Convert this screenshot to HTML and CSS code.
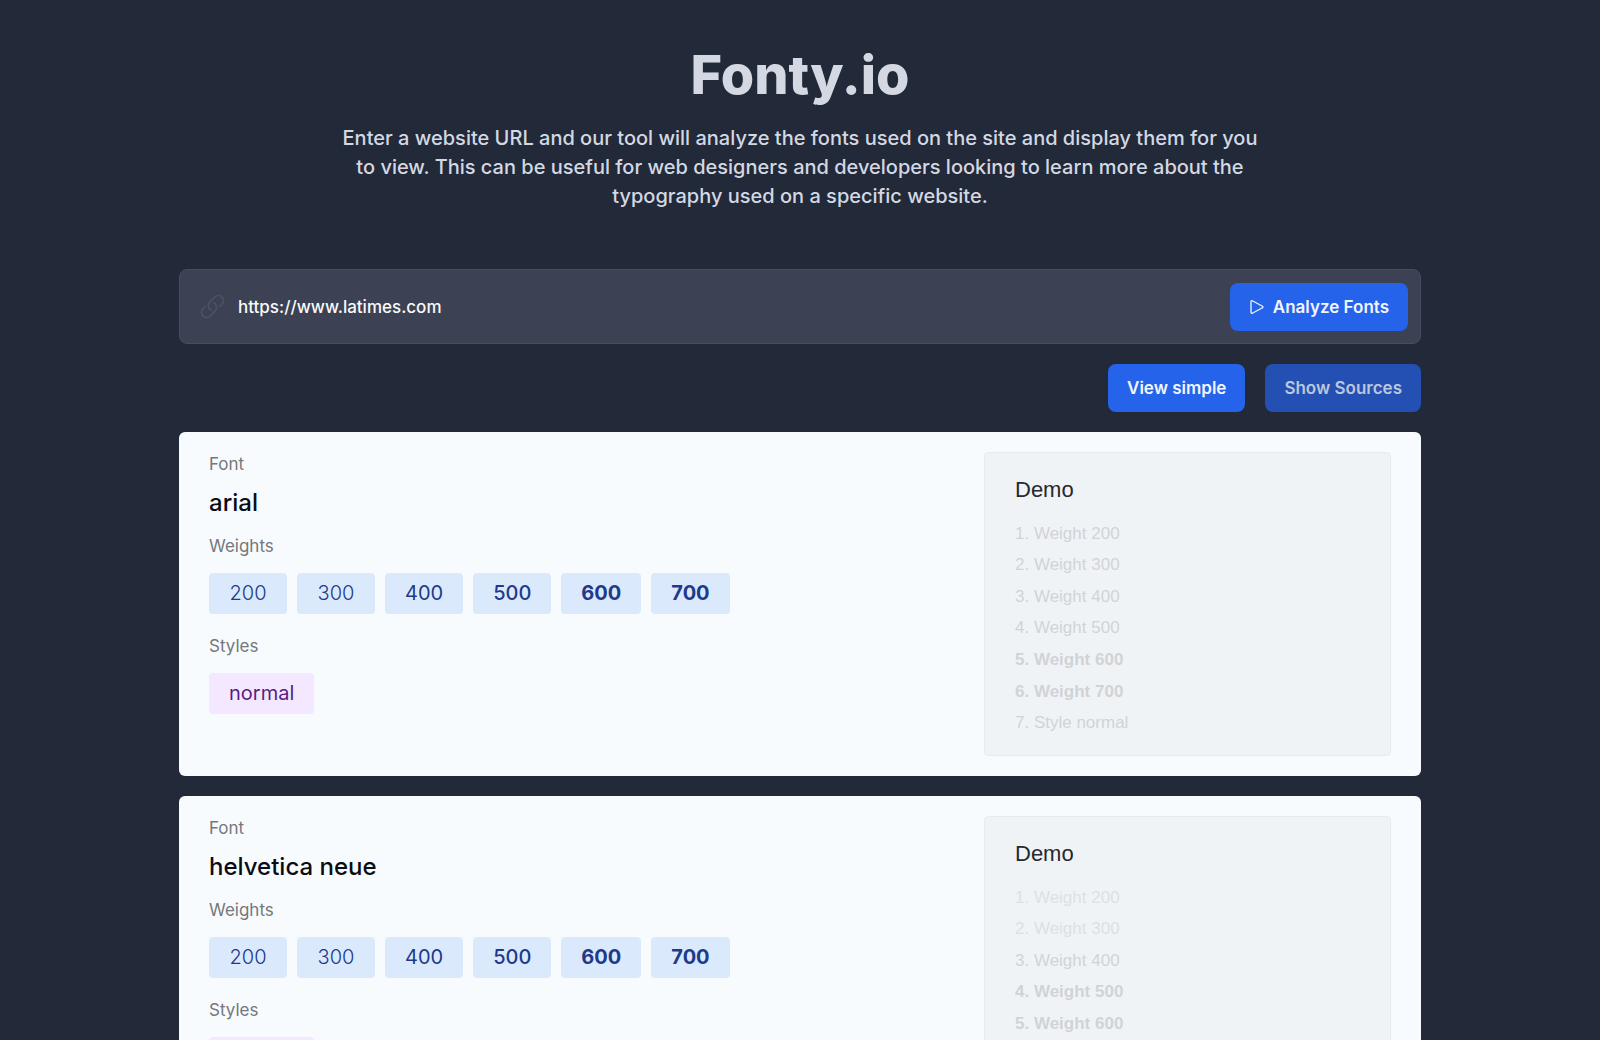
FILE: index.html
```html
<!DOCTYPE html>
<html lang="en">
<head>
    <meta charset="UTF-8">
    <meta name="viewport" content="width=device-width, initial-scale=1.0">
    <title>Fonty.io</title>
    <link rel="stylesheet" href="styles.css">
</head>
<body>
    <header class="hero">
        <h1>Fonty.io</h1>
        <p>Enter a website URL and our tool will analyze the fonts used on the site and display them for you to view. This can be useful for web designers and developers looking to learn more about the typography used on a specific website.</p>
    </header>

    <main class="container">
        <form class="search">
            <label for="url" aria-label="Website URL">
                <svg class="link-icon" viewBox="0 0 24 24" fill="none" stroke="currentColor" stroke-width="1.8" stroke-linecap="round" stroke-linejoin="round">
                    <path d="M13.19 8.688a4.5 4.5 0 0 1 1.242 7.244l-4.5 4.5a4.5 4.5 0 0 1-6.364-6.364l1.757-1.757m13.35-.622 1.757-1.757a4.5 4.5 0 0 0-6.364-6.364l-4.5 4.5a4.5 4.5 0 0 0 1.242 7.244"/>
                </svg>
            </label>
            <input type="text" id="url" value="https://www.latimes.com">
            <button type="button" class="btn">
                <svg class="play-icon" viewBox="0 0 16 16" fill="none" stroke="currentColor" stroke-width="1.3" stroke-linejoin="round">
                    <path d="M2 2.6v10.8c0 .7.7 1.1 1.3.8l10.2-5.4c.6-.3.6-1.2 0-1.5L3.3 1.8C2.7 1.5 2 1.9 2 2.6z"/>
                </svg>
                Analyze Fonts
            </button>
        </form>

        <div class="actions">
            <button type="button" class="btn">View simple</button>
            <button type="button" class="btn btn-muted">Show Sources</button>
        </div>

        <section class="card">
            <div class="info">
                <h3>Font</h3>
                <h2>arial</h2>
                <h3>Weights</h3>
                <div class="tags">
                    <span class="tag w200">200</span>
                    <span class="tag w300">300</span>
                    <span class="tag w400">400</span>
                    <span class="tag w500">500</span>
                    <span class="tag w600">600</span>
                    <span class="tag w700">700</span>
                </div>
                <h3>Styles</h3>
                <div class="tags">
                    <span class="tag tag-style">normal</span>
                </div>
            </div>
            <div class="demo">
                <h4>Demo</h4>
                <ol>
                    <li>1. Weight 200</li>
                    <li>2. Weight 300</li>
                    <li>3. Weight 400</li>
                    <li>4. Weight 500</li>
                    <li class="w600">5. Weight 600</li>
                    <li class="w700">6. Weight 700</li>
                    <li>7. Style normal</li>
                </ol>
            </div>
        </section>

        <section class="card">
            <div class="info">
                <h3>Font</h3>
                <h2>helvetica neue</h2>
                <h3>Weights</h3>
                <div class="tags">
                    <span class="tag w200">200</span>
                    <span class="tag w300">300</span>
                    <span class="tag w400">400</span>
                    <span class="tag w500">500</span>
                    <span class="tag w600">600</span>
                    <span class="tag w700">700</span>
                </div>
                <h3>Styles</h3>
                <div class="tags">
                    <span class="tag tag-style">normal</span>
                </div>
            </div>
            <div class="demo">
                <h4>Demo</h4>
                <ol>
                    <li class="light">1. Weight 200</li>
                    <li class="light">2. Weight 300</li>
                    <li>3. Weight 400</li>
                    <li class="w600">4. Weight 500</li>
                    <li class="w600">5. Weight 600</li>
                    <li class="w700">6. Weight 700</li>
                    <li>7. Style normal</li>
                </ol>
            </div>
        </section>
    </main>
</body>
</html>
```
FILE: styles.css
```css
:root {
    --bg: #222938;
    --bar: #3c4153;
    --blue: #2563eb;
    --text: #d3d8e3;
}

* {
    box-sizing: border-box;
    margin: 0;
    padding: 0;
}

body {
    font-family: Inter, 'Open Sans', sans-serif;
    background-color: var(--bg);
    color: var(--text);
    min-height: 100vh;
}

.hero {
    padding: 43px 20px 0;
    text-align: center;
}

.hero h1 {
    font-size: 54px;
    line-height: 64px;
    font-weight: 800;
}

.hero p {
    max-width: 932px;
    margin: 17px auto 0;
    font-size: 20px;
    line-height: 29px;
    font-weight: 500;
}

.container {
    width: 100%;
    max-width: 1282px;
    margin: 0 auto;
    padding: 58px 20px;
}

.search {
    display: flex;
    align-items: center;
    gap: 12px;
    height: 75px;
    padding: 0 12px 0 19px;
    background-color: var(--bar);
    border: 1px solid #484d5e;
    border-radius: 8px;
}

.search label {
    display: flex;
}

.link-icon {
    width: 27px;
    height: 27px;
    color: #4a5063;
}

.search input {
    flex: 1;
    min-width: 0;
    background: none;
    border: none;
    outline: none;
    color: #f8fafc;
    font-family: inherit;
    font-size: 17px;
    font-weight: 500;
}

.btn {
    display: flex;
    align-items: center;
    gap: 8px;
    height: 48px;
    padding: 0 19px;
    background-color: var(--blue);
    border: none;
    border-radius: 8px;
    color: #f1f5fd;
    font-family: inherit;
    font-size: 17px;
    font-weight: 600;
    cursor: pointer;
}

.btn-muted {
    background-color: #2450b4;
    color: #bcc6dc;
}

.play-icon {
    width: 16px;
    height: 16px;
}

.actions {
    display: flex;
    justify-content: flex-end;
    gap: 20px;
    margin: 20px 0;
}

.card {
    display: flex;
    justify-content: space-between;
    gap: 30px;
    margin-bottom: 20px;
    padding: 20px 30px;
    background-color: #f8fbfe;
    border-radius: 6px;
}

.info h3 {
    color: #74777c;
    font-size: 17px;
    line-height: 24px;
    font-weight: 400;
}

.info h2 {
    margin: 9px 0 13px;
    color: #0b0d14;
    font-size: 24px;
    line-height: 36px;
    font-weight: 500;
}

.tags {
    display: flex;
    flex-wrap: wrap;
    gap: 10px;
    margin: 15px 0 20px;
}

.tag {
    min-width: 78px;
    padding: 0 20px;
    background-color: #dbe9fd;
    border-radius: 4px;
    color: #1e3a8a;
    font-size: 20px;
    line-height: 41px;
    text-align: center;
}

.tag-style {
    background-color: #f3e8ff;
    color: #581c87;
}

.w200 { font-weight: 300; }
.w300 { font-weight: 300; }
.w400 { font-weight: 400; }
.w500 { font-weight: 500; }
.w600 { font-weight: 700; }
.w700 { font-weight: 700; }

.demo {
    display: flex;
    flex-direction: column;
    flex: 0 0 407px;
    min-height: 304px;
    padding: 21px 30px 16px;
    background-color: #f0f3f6;
    border: 1px solid #e8ebee;
    border-radius: 4px;
    font-family: 'Liberation Sans', Arial, sans-serif;
}

.demo h4 {
    margin-bottom: 12px;
    color: #26292d;
    font-size: 22px;
    line-height: 32px;
    font-weight: 400;
}

/* rows share the height left under the heading */
.demo ol {
    display: grid;
    flex: 1;
    align-items: center;
    list-style: none;
    color: #d0d3d6;
    font-size: 17px;
    line-height: 24px;
}

.demo .light {
    color: #dde0e3;
}

@media (max-width: 900px) {
    .card {
        flex-direction: column;
    }

    .demo {
        flex-basis: auto;
    }
}
```
